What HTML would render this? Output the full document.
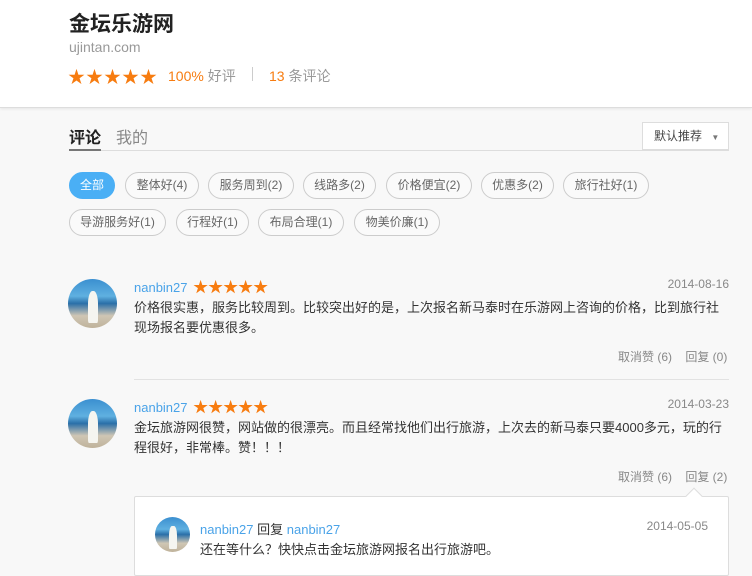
<!DOCTYPE html>
<html><head><meta charset="utf-8"><style>
*{margin:0;padding:0;box-sizing:border-box}
body{width:752px;height:566px;overflow:hidden;background:#f8f8f8;font-family:"Liberation Sans","Noto Sans CJK SC",sans-serif;color:#333;position:relative}
.hd{position:absolute;left:0;top:0;width:752px;height:108px;background:#fff;border-bottom:1px solid #ddd;box-shadow:0 1px 3px rgba(0,0,0,.08)}
.abs{position:absolute;white-space:nowrap}
.st{color:#f77c10;letter-spacing:0}
.tag{position:absolute;height:27px;line-height:25px;border:1px solid #ccc;border-radius:14px;font-size:12px;color:#666;text-align:center;background:#fafafa}
.av{position:absolute;border-radius:50%;background:linear-gradient(180deg,#3b8fd0 0%,#5fb0e0 35%,#2a6fa8 50%,#cfc6b4 75%,#bfb29a 100%);overflow:hidden}
.av:after{content:"";position:absolute;left:40%;top:25%;width:22%;height:65%;background:#f5f5f0;border-radius:40% 40% 10% 10%}
.name{color:#4aa3e8;font-size:13px}
.date{color:#888;font-size:12px}
.txt{font-size:13px;line-height:20px;color:#333}
.act{font-size:12px;color:#888}
</style></head><body>
<div class="hd">
<div class="abs" style="left:69px;top:8px;font-size:21px;font-weight:bold;color:#222">金坛乐游网</div>
<div class="abs" style="left:69px;top:39px;font-size:14px;color:#999">ujintan.com</div>
<div class="abs st" style="left:68px;top:63px;font-size:17px;letter-spacing:1px">★★★★★</div>
<div class="abs" style="left:168px;top:66px;font-size:14px;color:#f77c10">100% <span style="color:#999">好评</span></div>
<div class="abs" style="left:252px;top:67px;width:1px;height:14px;background:#ccc"></div>
<div class="abs" style="left:269px;top:66px;font-size:14px;color:#f77c10">13 <span style="color:#999">条评论</span></div>
</div>
<div class="abs" style="left:69px;top:124px;font-size:16px;font-weight:bold;color:#222">评论</div>
<div class="abs" style="left:116px;top:124px;font-size:16px;color:#888">我的</div>
<div class="abs" style="left:69px;top:150px;width:660px;height:1px;background:#ddd"></div>
<div class="abs" style="left:69px;top:149px;width:32px;height:2px;background:#777"></div>
<div class="abs" style="left:642px;top:122px;width:87px;height:28px;border:1px solid #ddd;background:#fff;font-size:12px;line-height:26px;padding-left:11px;color:#444">默认推荐 <span style="font-size:8px;color:#777;margin-left:6px">▼</span></div>
<div class="tag" style="left:69px;top:172px;width:46px;background:#4aaff5;border-color:#4aaff5;color:#fff">全部</div>
<div class="tag" style="left:125px;top:172px;width:74px">整体好(4)</div>
<div class="tag" style="left:208px;top:172px;width:86px">服务周到(2)</div>
<div class="tag" style="left:303px;top:172px;width:73px">线路多(2)</div>
<div class="tag" style="left:386px;top:172px;width:86px">价格便宜(2)</div>
<div class="tag" style="left:481px;top:172px;width:73px">优惠多(2)</div>
<div class="tag" style="left:563px;top:172px;width:86px">旅行社好(1)</div>
<div class="tag" style="left:69px;top:209px;width:97px">导游服务好(1)</div>
<div class="tag" style="left:176px;top:209px;width:73px">行程好(1)</div>
<div class="tag" style="left:258px;top:209px;width:86px">布局合理(1)</div>
<div class="tag" style="left:354px;top:209px;width:86px">物美价廉(1)</div>

<div class="av" style="left:68px;top:279px;width:49px;height:49px"></div>
<div class="abs name" style="left:134px;top:276px">nanbin27 <span class="st" style="font-size:15px;margin-left:2px">★★★★★</span></div>
<div class="abs date" style="right:23px;top:277px">2014-08-16</div>
<div class="abs txt" style="left:134px;top:298px;white-space:normal;width:595px">价格很实惠，服务比较周到。比较突出好的是，上次报名新马泰时在乐游网上咨询的价格，比到旅行社现场报名要优惠很多。</div>
<div class="abs act" style="left:618px;top:348px">取消赞 (6)&nbsp;&nbsp;&nbsp;&nbsp;回复 (0)</div>
<div class="abs" style="left:134px;top:379px;width:595px;height:1px;background:#e2e2e2"></div>

<div class="av" style="left:68px;top:399px;width:49px;height:49px"></div>
<div class="abs name" style="left:134px;top:396px">nanbin27 <span class="st" style="font-size:15px;margin-left:2px">★★★★★</span></div>
<div class="abs date" style="right:23px;top:397px">2014-03-23</div>
<div class="abs txt" style="left:134px;top:418px;white-space:normal;width:595px">金坛旅游网很赞，网站做的很漂亮。而且经常找他们出行旅游，上次去的新马泰只要4000多元，玩的行程很好，非常棒。赞！！！</div>
<div class="abs act" style="left:618px;top:468px">取消赞 (6)&nbsp;&nbsp;&nbsp;&nbsp;回复 (2)</div>
<div class="abs" style="left:134px;top:496px;width:595px;height:80px;background:#fff;border:1px solid #ddd;border-radius:2px"></div>
<div class="abs" style="left:688px;top:490px;width:12px;height:12px;background:#fff;border-left:1px solid #ddd;border-top:1px solid #ddd;transform:rotate(45deg)"></div>
<div class="av" style="left:155px;top:517px;width:35px;height:35px"></div>
<div class="abs name" style="left:200px;top:519px">nanbin27 <span style="color:#333">回复</span> nanbin27</div>
<div class="abs date" style="right:44px;top:519px">2014-05-05</div>
<div class="abs txt" style="left:200px;top:540px">还在等什么？快快点击金坛旅游网报名出行旅游吧。</div>
</body></html>
